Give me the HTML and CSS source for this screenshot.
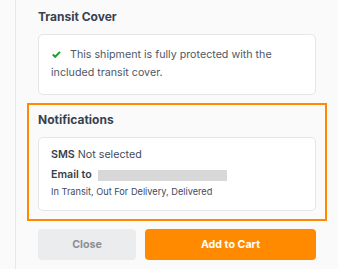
FILE: index.html
```html
<!DOCTYPE html>
<html>
<head>
<meta charset="utf-8">
<link rel="stylesheet" href="styles.css">
</head>
<body>
<div class="panel">
  <h3 class="section-title">Transit Cover</h3>
  <div class="card cover-card">
    <p class="cover-text"><svg class="check" width="9" height="7" viewBox="0 0 9 7"><path d="M0.8 3.5 L3.2 5.8 L8 0.9" fill="none" stroke="#1d9e2c" stroke-width="2"/></svg>This shipment is fully protected with the included transit cover.</p>
  </div>
  <div class="notify">
    <h3 class="section-title notify-title">Notifications</h3>
    <div class="card notify-card">
      <div class="row"><b>SMS</b> Not selected</div>
      <div class="row email"><b>Email to</b><span class="redacted"></span></div>
      <div class="events">In Transit, Out For Delivery, Delivered</div>
    </div>
  </div>
  <div class="actions">
    <button class="btn btn-close">Close</button>
    <button class="btn btn-cart">Add to Cart</button>
  </div>
</div>
</body>
</html>
```

FILE: styles.css
```css
html, body {
  margin: 0;
  padding: 0;
  background: #fafafa;
  font-family: Inter, "Liberation Sans", sans-serif;
}
.panel {
  margin-left: 15px;
  border-left: 1px solid #e8e8e8;
  padding: 9px 22px 0 22px;
  min-height: 269px;
  box-sizing: border-box;
}
.section-title {
  margin: 0;
  font-size: 12px;
  line-height: 16px;
  font-weight: 650;
  color: #374150;
}
.card {
  background: #fff;
  border: 1px solid #e4e6ea;
  border-radius: 5px;
}
.cover-card {
  margin-top: 9px;
  padding: 11px 12px 12px 12px;
}
.cover-text {
  margin: 0;
  font-size: 10.7px;
  line-height: 18px;
  color: #505866;
}
.check {
  margin: 0 9px 0 1px;
  vertical-align: 0;
}
.notify {
  margin: 8px -11px 0 -11px;
  border: 2px solid #ff8a00;
  padding: 7px 9px 8px 9px;
}
.notify-card {
  margin-top: 9px;
  padding: 8px 12px 11px 12px;
}
.row {
  font-size: 10.7px;
  line-height: 18px;
  color: #444c59;
}
.row b {
  font-weight: 600;
  color: #373f4c;
}
.email {
  margin-top: 2px;
  display: flex;
  align-items: center;
}
.redacted {
  display: inline-block;
  width: 129px;
  height: 11px;
  background: #d8d8d8;
  margin-left: 6px;
}
.events {
  font-size: 9.2px;
  line-height: 14px;
  color: #3e4a63;
  margin-top: 1px;
}
.actions {
  display: flex;
  gap: 9px;
  margin-top: 8px;
}
.btn {
  height: 31px;
  border: none;
  border-radius: 4px;
  font-family: Inter, "Liberation Sans", sans-serif;
  font-size: 10.7px;
  font-weight: 700;
  padding: 0;
}
.btn-close {
  width: 98px;
  background: #ebecee;
  color: #8c8f94;
}
.btn-cart {
  flex: 1;
  background: #ff8a00;
  color: #fff;
}
```
